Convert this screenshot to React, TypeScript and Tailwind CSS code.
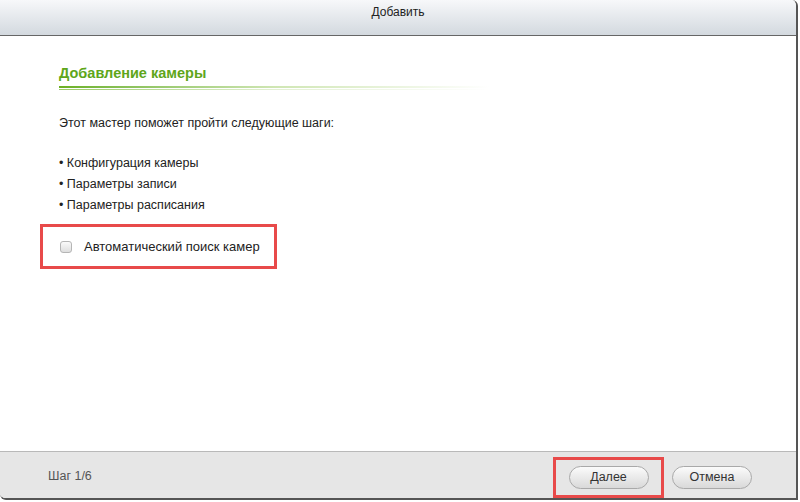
import React from "react";

const font = { fontFamily: "'Liberation Sans', Arial, sans-serif" };

const steps = ["Конфигурация камеры", "Параметры записи", "Параметры расписания"];

export default function App() {
  return (
    <div className="w-[800px] h-[502px] bg-white overflow-hidden" style={font}>
      <div className="w-[798px] h-[500px] flex flex-col border-r-2 border-b-2 border-[#555] rounded-tr-[6px] rounded-bl-[6px] overflow-hidden">
        {/* title */}
        <div className="h-[36px] shrink-0 flex items-center justify-center bg-gradient-to-b from-[#f7f8fa] to-[#d3d9df] border-b border-[#666]">
          <span className="text-[12px] text-[#222] -mt-[12px]">Добавить</span>
        </div>

        {/* body */}
        <div className="flex-1 flex flex-col pl-[59px] pt-[27px]">
          <div className="text-[14.5px] font-bold text-[#5ea61a] leading-[20px]">Добавление камеры</div>
          <div className="mt-[3px] w-[430px] h-[2px] bg-gradient-to-r from-[#6bb020] via-[#cfe6b3] to-transparent" />
          <div className="mt-[1px] w-[430px] h-[1px] bg-gradient-to-r from-[#9ccc66] via-[#e3f0d3] to-transparent" />

          <p className="mt-[25px] text-[12.5px] text-[#222] leading-[16px]">Этот мастер поможет пройти следующие шаги:</p>

          <ul className="mt-[24px] flex flex-col gap-[5px]">
            {steps.map((s) => (
              <li key={s} className="text-[12.5px] text-[#222] leading-[16px]">
                • {s}
              </li>
            ))}
          </ul>

          <div className="-ml-[19px] mt-[11px] w-[237px] h-[45px] border-[3px] border-[#e84a4a] flex items-center pl-[17px]">
            <span className="w-[12px] h-[12px] rounded-[3px] border border-[#b5b5b5] bg-gradient-to-b from-[#fafafa] to-[#dedede]" />
            <span className="ml-[12px] text-[13px] text-[#222]">Автоматический поиск камер</span>
          </div>
        </div>

        {/* footer */}
        <div className="h-[47px] shrink-0 bg-[#e6e6e6] border-t border-[#b9b9b9] flex items-center pl-[48px] pr-[44px]">
          <span className="text-[12.5px] text-[#555] mt-[3px]">Шаг 1/6</span>
          <div className="ml-auto flex items-center">
            <div className="w-[111px] h-[41px] border-[3px] border-[#e84a4a] flex items-center justify-center mt-[4px]">
              <button className="w-[80px] h-[23px] rounded-full border border-[#a9a9a9] bg-gradient-to-b from-[#fbfbfb] to-[#d9d9d9] text-[12.5px] text-[#333]">
                Далее
              </button>
            </div>
            <button className="ml-[8px] w-[80px] h-[23px] rounded-full border border-[#a9a9a9] bg-gradient-to-b from-[#fbfbfb] to-[#d9d9d9] text-[12.5px] text-[#333] mt-[4px]">
              Отмена
            </button>
          </div>
        </div>
      </div>
    </div>
  );
}
